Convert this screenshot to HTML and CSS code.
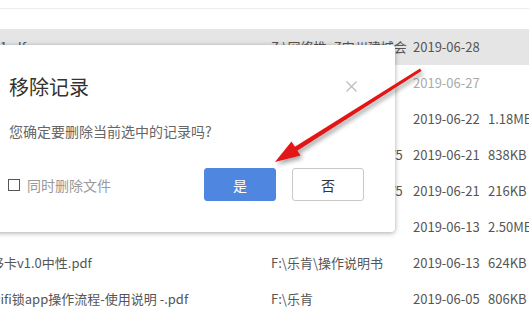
FILE: index.html
```html
<!DOCTYPE html>
<html lang="zh-CN">
<head>
<meta charset="utf-8">
<title>移除记录</title>
<link rel="stylesheet" href="styles.css">
</head>
<body>
<div class="page">
  <div class="toolbar"></div>
  <div class="gap"></div>
  <div class="list">
    <div class="row selected"><span class="c-name"><span class="tail">1 .df</span></span><span class="c-path">Z:\网络推_Z安州建城会</span><span class="c-date">2019-06-28</span><span class="c-size"></span></div>
    <div class="row"><span class="c-name"></span><span class="c-path">Z:\网络推</span><span class="c-date muted">2019-06-27</span><span class="c-size"></span></div>
    <div class="row"><span class="c-name"></span><span class="c-path">F:\乐肯</span><span class="c-date">2019-06-22</span><span class="c-size">1.18MB</span></div>
    <div class="row"><span class="c-name"></span><span class="c-path">F:\乐肯\操作说明书\V5</span><span class="c-date">2019-06-21</span><span class="c-size">838KB</span></div>
    <div class="row"><span class="c-name"></span><span class="c-path">F:\乐肯\操作说明书\V5</span><span class="c-date">2019-06-21</span><span class="c-size">216KB</span></div>
    <div class="row"><span class="c-name"></span><span class="c-path"></span><span class="c-date">2019-06-13</span><span class="c-size">2.50MB</span></div>
    <div class="row"><span class="c-name">移卡v1.0中性.pdf</span><span class="c-path">F:\乐肯\操作说明书</span><span class="c-date">2019-06-13</span><span class="c-size">624KB</span></div>
    <div class="row"><span class="c-name shift">wifi锁app操作流程-使用说明 -.pdf</span><span class="c-path">F:\乐肯</span><span class="c-date">2019-06-05</span><span class="c-size">806KB</span></div>
  </div>

  <div class="dialog">
    <div class="dlg-head">
      <div class="dlg-title">移除记录</div>
      <svg class="dlg-close" width="11" height="11" viewBox="0 0 11 11"><path d="M0.5 0.5 L10.5 10.5 M10.5 0.5 L0.5 10.5" stroke="#b9b9b9" stroke-width="1.1" fill="none"/></svg>
    </div>
    <div class="dlg-msg">您确定要删除当前选中的记录吗?</div>
    <div class="dlg-foot">
      <label class="chk"><span class="chk-box"></span><span class="chk-text">同时删除文件</span></label>
      <div class="btns">
        <button class="btn btn-yes">是</button>
        <button class="btn btn-no">否</button>
      </div>
    </div>
  </div>

  <svg class="arrow" width="529" height="312" viewBox="0 0 529 312">
    <defs>
      <filter id="sh" x="-20%" y="-20%" width="140%" height="140%">
        <feDropShadow dx="2" dy="3" stdDeviation="2" flood-color="#000" flood-opacity="0.35"/>
      </filter>
    </defs>
    <g filter="url(#sh)">
      <path d="M420 68.5 L421.5 71 L293 153.5 L290.5 149.5 Z" fill="#e21414"/>
      <polygon points="275,162 291.5,141.5 300.5,155.5" fill="#e21414"/>
    </g>
  </svg>
</div>
</body>
</html>
```

FILE: styles.css
```css
html, body {
  margin: 0;
  padding: 0;
}
body {
  width: 529px;
  height: 312px;
  overflow: hidden;
  background: #fff;
  font-family: "Noto Sans CJK SC", "Noto Sans", sans-serif;
}
.page {
  position: relative;
  width: 529px;
  height: 312px;
  overflow: hidden;
}
.toolbar {
  height: 8px;
  border-bottom: 1px solid #ececec;
}
.gap {
  height: 20px;
}
.list {
  display: flex;
  flex-direction: column;
}
.row {
  display: flex;
  align-items: center;
  height: 36px;
  font-size: 13px;
  line-height: 18px;
  color: #555;
  white-space: nowrap;
}
.row.selected {
  background: #e5e5e5;
}
.c-name {
  width: 280px;
  margin-left: -9px;
  flex: none;
  overflow: hidden;
}
.c-name.shift {
  margin-left: -10px;
  width: 281px;
}
.tail {
  padding-left: 9px;
}
.c-path {
  width: 142px;
  flex: none;
  overflow: hidden;
}
.c-date {
  width: 75px;
  flex: none;
}
.c-date.muted {
  color: #aaa;
}
.c-size {
  flex: none;
}

.dialog {
  position: absolute;
  left: -12px;
  top: 45px;
  width: 407px;
  height: 187px;
  box-sizing: border-box;
  padding: 27px 31px 31px 21px;
  background: #fff;
  border-radius: 4px;
  box-shadow: 0 1px 5px rgba(0, 0, 0, 0.35);
  display: flex;
  flex-direction: column;
}
.dlg-head {
  display: flex;
  align-items: center;
  justify-content: space-between;
}
.dlg-title {
  font-size: 20px;
  line-height: 30px;
  color: #333;
}
.dlg-close {
  margin-right: 7px;
  margin-top: -2px;
}
.dlg-msg {
  margin-top: 19px;
  font-size: 14px;
  line-height: 20px;
  color: #666;
}
.dlg-foot {
  margin-top: auto;
  display: flex;
  align-items: center;
  justify-content: space-between;
}
.chk {
  display: flex;
  align-items: center;
  margin-left: -1px;
}
.chk-box {
  width: 10px;
  height: 10px;
  border: 1px solid #555;
  background: #fff;
}
.chk-text {
  margin-left: 7px;
  font-size: 14px;
  line-height: 20px;
  color: #999;
}
.btns {
  display: flex;
  gap: 16px;
}
.btn {
  width: 72px;
  height: 33px;
  box-sizing: border-box;
  border-radius: 3px;
  font-family: "Noto Sans CJK SC", "Noto Sans", sans-serif;
  font-size: 14px;
  padding: 0;
  cursor: pointer;
}
.btn-yes {
  background: #4e86e0;
  border: 1px solid #4e86e0;
  color: #fff;
}
.btn-no {
  background: #fff;
  border: 1px solid #c9c9c9;
  color: #333;
}
.arrow {
  position: absolute;
  left: 0;
  top: 0;
  pointer-events: none;
}
```
